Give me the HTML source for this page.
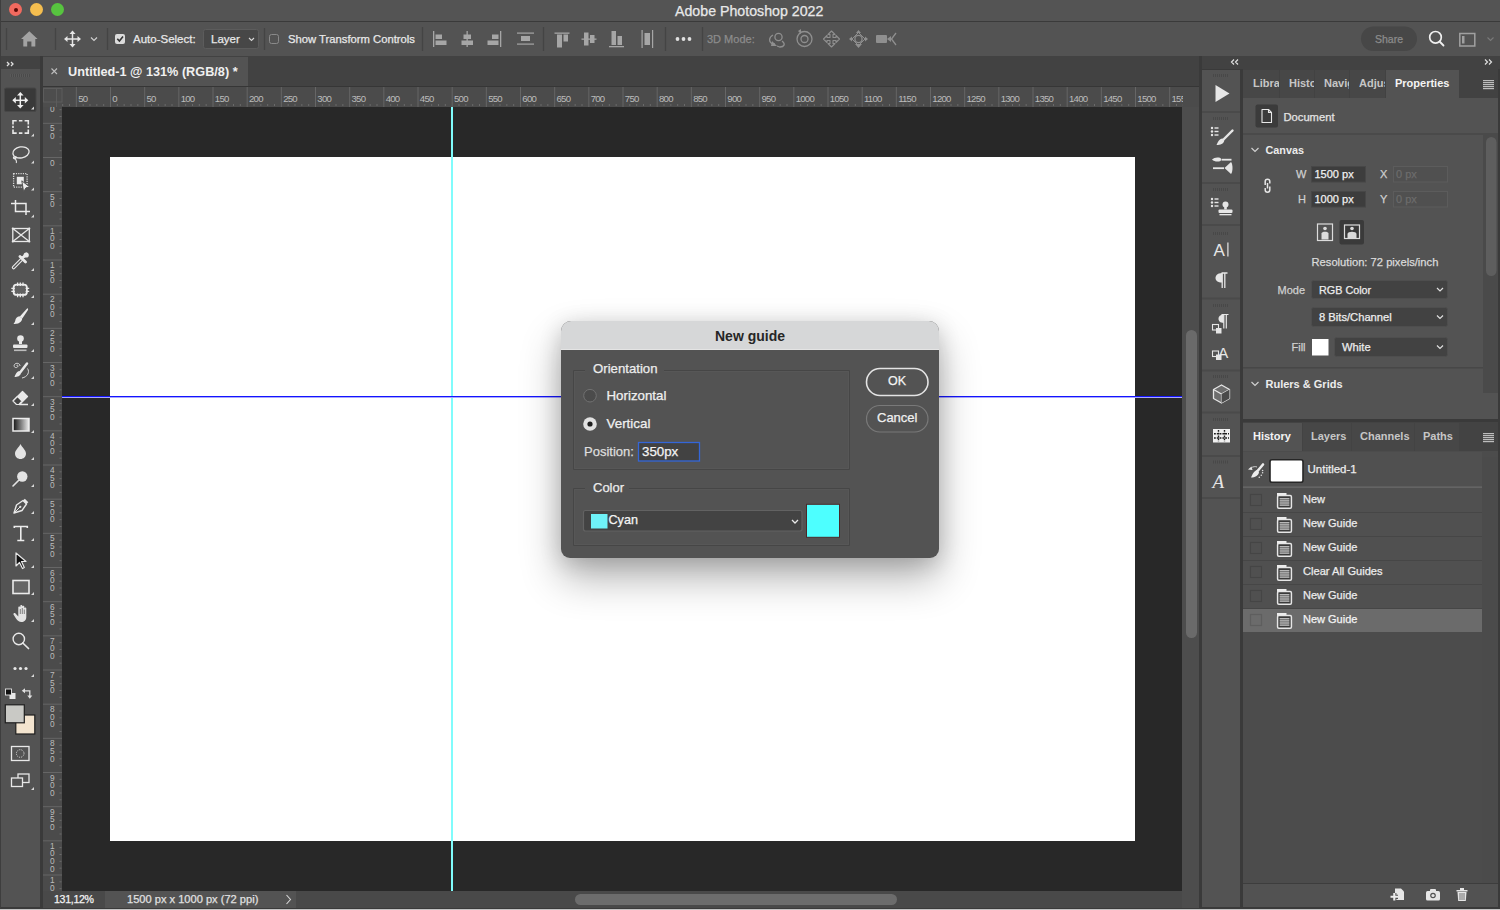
<!DOCTYPE html>
<html><head><meta charset="utf-8">
<style>
*{box-sizing:border-box;margin:0;padding:0}
html,body{width:1500px;height:910px;overflow:hidden;background:#535353;font-family:"Liberation Sans",sans-serif;color:#e8e8e8}
.a{position:absolute}
.t{position:absolute;white-space:nowrap;line-height:1;-webkit-text-stroke:0.25px currentColor}
</style></head><body>
<!-- title bar -->
<div class="a" style="left:0;top:0;width:1500px;height:21px;background:#545454"></div>
<div class="a" style="left:0;top:21px;width:1500px;height:1px;background:#3a3a3a"></div>
<div class="a" style="left:9px;top:3px;width:13px;height:13px;border-radius:50%;background:#f26a5f"></div>
<div class="a" style="left:13.5px;top:7.5px;width:4px;height:4px;border-radius:50%;background:#5a0a06"></div>
<div class="a" style="left:30px;top:3px;width:13px;height:13px;border-radius:50%;background:#f5be4f"></div>
<div class="a" style="left:51px;top:3px;width:13px;height:13px;border-radius:50%;background:#57c43f"></div>
<div class="t" style="left:675px;top:4px;font-size:14.2px;color:#e8e8e8">Adobe Photoshop 2022</div>
<!-- options bar -->
<div class="a" style="left:0;top:22px;width:1500px;height:34px;background:#535353"></div>
<svg class="a" style="left:0;top:22px" width="1500" height="34">
 <g stroke="#444" stroke-width="1.2">
  <line x1="6.5" y1="6" x2="6.5" y2="28"/><line x1="55.5" y1="6" x2="55.5" y2="28"/>
  <line x1="107.5" y1="6" x2="107.5" y2="28"/><line x1="264.5" y1="6" x2="264.5" y2="28"/>
  <line x1="422.5" y1="5" x2="422.5" y2="29"/><line x1="543.5" y1="5" x2="543.5" y2="29"/>
  <line x1="665.5" y1="5" x2="665.5" y2="29"/><line x1="702.5" y1="5" x2="702.5" y2="29"/>
 </g>
 <!-- home -->
 <path d="M29.3 9.2 L37.6 17 L35.3 17 L35.3 24.6 L31.4 24.6 L31.4 19.5 L27.2 19.5 L27.2 24.6 L23.3 24.6 L23.3 17 L21 17 Z" fill="#a3a3a3"/>
 <!-- move tool -->
 <g stroke="#e6e6e6" stroke-width="1.5" fill="none"><line x1="72.5" y1="10" x2="72.5" y2="24"/><line x1="65.5" y1="17" x2="79.5" y2="17"/></g>
 <g fill="#e6e6e6"><path d="M72.5 8.5 L69.5 12 L75.5 12Z"/><path d="M72.5 25.5 L69.5 22 L75.5 22Z"/><path d="M64 17 L67.5 14 L67.5 20Z"/><path d="M81 17 L77.5 14 L77.5 20Z"/></g>
 <path d="M91 15.5 L94 18.5 L97 15.5" stroke="#cfcfcf" stroke-width="1.2" fill="none"/>
 <!-- checkbox checked -->
 <rect x="115" y="12" width="10" height="10" rx="2" fill="#dcdcdc"/>
 <path d="M117.3 16.8 L119.4 19 L123 14.6" stroke="#333" stroke-width="1.6" fill="none"/>
 <!-- layer dropdown -->
 <rect x="203.5" y="7.5" width="55" height="19" rx="2" fill="#474747" stroke="#5c5c5c"/>
 <path d="M249 16 L251.5 18.5 L254 16" stroke="#d8d8d8" stroke-width="1.1" fill="none"/>
 <!-- empty checkbox -->
 <rect x="269.5" y="12.5" width="9" height="9" rx="2" fill="none" stroke="#8a8a8a" stroke-width="1"/>
 <!-- align icons -->
 <g fill="#a6a6a6">
  <rect x="433" y="9" width="1.3" height="16"/><rect x="435.5" y="12.5" width="6.5" height="4.5"/><rect x="435.5" y="18.5" width="11" height="4.5"/>
  <rect x="466.5" y="9" width="1.3" height="16"/><rect x="463.5" y="12.5" width="7.5" height="4.5"/><rect x="461.5" y="18.5" width="11.5" height="4.5"/>
  <rect x="500" y="9" width="1.3" height="16"/><rect x="492" y="12.5" width="6.5" height="4.5"/><rect x="487.5" y="18.5" width="11" height="4.5"/>
  <rect x="517" y="10.5" width="17" height="1.2"/><rect x="517" y="21.5" width="17" height="1.2"/><rect x="521" y="14" width="9" height="5"/>
  <rect x="554.5" y="10.5" width="15" height="1.3"/><rect x="557" y="12.5" width="5" height="13"/><rect x="563.5" y="12.5" width="4.5" height="7"/>
  <rect x="581.5" y="16.5" width="15" height="1.3"/><rect x="584" y="10.5" width="4.5" height="13"/><rect x="590" y="13" width="4.5" height="8"/>
  <rect x="609" y="24" width="15" height="1.3"/><rect x="611.5" y="9" width="4.5" height="14"/><rect x="617.5" y="14" width="4.5" height="9"/>
  <rect x="641.5" y="8" width="1.2" height="18"/><rect x="652" y="8" width="1.2" height="18"/><rect x="644.5" y="11" width="5.5" height="12"/>
 </g>
 <g fill="#e0e0e0"><circle cx="677.5" cy="17" r="1.9"/><circle cx="683.5" cy="17" r="1.9"/><circle cx="689.5" cy="17" r="1.9"/></g>
 <!-- 3d icons -->
 <g stroke="#8f8f8f" stroke-width="1.3" fill="none">
  <circle cx="778.5" cy="15" r="3.6"/><path d="M773 13 C769 15 768 20 773 22 L775 22 M782 19 C786 22 784 25 780 25 L777 24"/>
  <circle cx="804.5" cy="17" r="7.5"/><circle cx="804.5" cy="17" r="3.5"/>
  <path d="M831.5 9 L835 12.5 L833 12.5 L833 15.5 L836 15.5 L836 13.5 L839.5 17 L836 20.5 L836 18.5 L833 18.5 L833 21.5 L835 21.5 L831.5 25 L828 21.5 L830 21.5 L830 18.5 L827 18.5 L827 20.5 L823.5 17 L827 13.5 L827 15.5 L830 15.5 L830 12.5 L828 12.5 Z" stroke-width="1.1" stroke-linejoin="round"/>
  <circle cx="858.5" cy="17" r="3.6"/><path d="M852 17 L858.5 10.5 L865 17 L858.5 23.5 Z" stroke-width="1"/>
 </g>
 <g fill="#8f8f8f">
  <path d="M772 19 L777 24 L771 24Z"/><path d="M798 9 L801 7 L801 12Z"/>
  <path d="M858.5 8 L856 11 L861 11Z"/><path d="M858.5 26 L855 22 L862 22Z"/><path d="M849 17 L852 14.5 L852 19.5Z"/><path d="M868 17 L865 14.5 L865 19.5Z"/>
  <rect x="876" y="13" width="11" height="8" rx="1"/><path d="M887 17 L891 14 L891 20Z"/>
 </g>
 <path d="M896 11 L891.5 17 L896 23" stroke="#8f8f8f" stroke-width="1.3" fill="none"/>
 <!-- share -->
 <rect x="1361" y="4.5" width="56" height="24.5" rx="12.25" fill="#474747"/>
 <!-- search -->
 <circle cx="1435.5" cy="15.3" r="5.8" stroke="#f0f0f0" stroke-width="1.7" fill="none"/>
 <line x1="1439.6" y1="19.5" x2="1443.5" y2="23.5" stroke="#f0f0f0" stroke-width="1.8" stroke-linecap="round"/>
 <!-- workspace -->
 <rect x="1459.8" y="11.5" width="15" height="12.5" stroke="#a0a0a0" stroke-width="1.5" fill="none"/>
 <rect x="1462" y="14" width="2.5" height="7.5" fill="#a0a0a0"/>
 <path d="M1487.5 15.5 L1490.5 18.5 L1493.5 15.5" stroke="#7a7a7a" stroke-width="1.1" fill="none"/>
</svg>
<div class="t" style="left:133px;top:34px;font-size:11.5px;color:#e8e8e8">Auto-Select:</div>
<div class="t" style="left:211px;top:34px;font-size:11.5px;color:#e8e8e8">Layer</div>
<div class="t" style="left:288px;top:34px;font-size:11.25px;color:#e8e8e8">Show Transform Controls</div>
<div class="t" style="left:707px;top:34px;font-size:11px;color:#8c8c8c">3D Mode:</div>
<div class="t" style="left:1375px;top:33.5px;font-size:10.5px;color:#8c8c8c">Share</div>

<!-- dark frame below options -->
<div class="a" style="left:0;top:56px;width:1500px;height:854px;background:#3a3a3a"></div>

<!-- tools panel -->
<div class="a" style="left:0;top:56px;width:40px;height:13px;background:#424242"></div>
<div class="a" style="left:0;top:69px;width:40px;height:838px;background:#535353"></div>
<svg class="a" style="left:0;top:56px" width="40" height="851">
 <path d="M7 6 L9 8 L7 10 M11 6 L13 8 L11 10" stroke="#e0e0e0" stroke-width="1.3" fill="none"/>
 <g fill="#4a4a4a"><rect x="10" y="18" width="20" height="3"/></g>
 <g stroke="#5e5e5e" stroke-width="0.8"><path d="M10.5 18v3M12.5 18v3M14.5 18v3M16.5 18v3M18.5 18v3M20.5 18v3M22.5 18v3M24.5 18v3M26.5 18v3M28.5 18v3"/></g>
 <rect x="4.5" y="32" width="31.5" height="23.5" rx="1.5" fill="#393939" stroke="#474747" stroke-width="1"/>
</svg>
<svg class="a" style="left:0;top:0" width="40" height="910">
 <defs>
  <linearGradient id="gr" x1="0" x2="1"><stop offset="0" stop-color="#111"/><stop offset="1" stop-color="#eee"/></linearGradient>
 </defs>
 <g fill="#d8d8d8">
  <!-- corner triangles -->
  <path d="M31 109.5 L34 106.5 L34 109.5Z"/><path d="M31 136.5 L34 133.5 L34 136.5Z"/><path d="M31 163.5 L34 160.5 L34 163.5Z"/>
  <path d="M31 190.5 L34 187.5 L34 190.5Z"/><path d="M31 217.5 L34 214.5 L34 217.5Z"/><path d="M31 271 L34 268 L34 271Z"/>
  <path d="M31 298 L34 295 L34 298Z"/><path d="M31 325 L34 322 L34 325Z"/><path d="M31 352 L34 349 L34 352Z"/>
  <path d="M31 379 L34 376 L34 379Z"/><path d="M31 406 L34 403 L34 406Z"/><path d="M31 433 L34 430 L34 433Z"/>
  <path d="M31 460 L34 457 L34 460Z"/><path d="M31 487 L34 484 L34 487Z"/><path d="M31 514 L34 511 L34 514Z"/>
  <path d="M31 541 L34 538 L34 541Z"/><path d="M31 568 L34 565 L34 568Z"/><path d="M31 595 L34 592 L34 595Z"/>
  <path d="M31 622 L34 619 L34 622Z"/><path d="M31 677 L34 674 L34 677Z"/><path d="M31 790 L34 787 L34 790Z"/>
 </g>
 <!-- move -->
 <g stroke="#f0f0f0" stroke-width="1.5" fill="none"><line x1="20.3" y1="94" x2="20.3" y2="107"/><line x1="13.5" y1="100.3" x2="27" y2="100.3"/></g>
 <g fill="#f0f0f0"><path d="M20.3 92 L17 95.5 L23.6 95.5Z"/><path d="M20.3 108.5 L17 105 L23.6 105Z"/><path d="M12.3 100.3 L15.8 97 L15.8 103.6Z"/><path d="M28.3 100.3 L24.8 97 L24.8 103.6Z"/></g>
 <!-- marquee -->
 <path d="M13 124.5 L13 120.8 L16.7 120.8 M24.6 120.8 L28.3 120.8 L28.3 124.5 M28.3 129.4 L28.3 133.1 L24.6 133.1 M16.7 133.1 L13 133.1 L13 129.4 M18.9 120.8 L22.4 120.8 M18.9 133.1 L22.4 133.1 M13 125.8 L13 128.1 M28.3 125.8 L28.3 128.1" stroke="#e8e8e8" stroke-width="1.6" fill="none"/>
 <!-- lasso -->
 <ellipse cx="21" cy="152.4" rx="8.2" ry="5.5" stroke="#e8e8e8" stroke-width="1.3" fill="none" transform="rotate(-10 21 152.4)"/>
 <path d="M14 156.5 C12.5 158.5 14.5 159.5 16 158 C17 157 15 156 14.8 157.5 C14.8 159 17.5 160.5 16.3 163" stroke="#e8e8e8" stroke-width="1.2" fill="none"/>
 <!-- object select -->
 <rect x="13.6" y="173.6" width="13.5" height="13.5" stroke="#d8d8d8" stroke-width="1.3" fill="none" stroke-dasharray="1.2 1.1"/>
 <rect x="16.8" y="176.8" width="7" height="7.5" fill="#ececec"/>
 <path d="M21.8 180.8 L30 187.3 L26 187.8 L23.6 191.8 Z" fill="#ececec" stroke="#535353" stroke-width="1"/>
 <!-- crop -->
 <g stroke="#ececec" stroke-width="1.5" fill="none"><path d="M11 203.5 L26 203.5 L26 215"/><path d="M15.5 200 L15.5 211.5 L30 211.5"/></g>
 <!-- frame -->
 <g stroke="#e8e8e8" stroke-width="1.3" fill="none"><rect x="12.8" y="228.5" width="16.5" height="13"/><path d="M12.8 228.5 L29.3 241.5 M29.3 228.5 L12.8 241.5"/></g>
 <g fill="#e8e8e8"><circle cx="12.8" cy="228.5" r="1.1"/><circle cx="29.3" cy="228.5" r="1.1"/><circle cx="12.8" cy="241.5" r="1.1"/><circle cx="29.3" cy="241.5" r="1.1"/></g>
 <!-- eyedropper -->
 <path d="M13.6 267.5 L22 259" stroke="#e8e8e8" stroke-width="3.6" stroke-linecap="round" fill="none"/>
 <path d="M13.6 267.5 L22 259" stroke="#535353" stroke-width="1.3" stroke-linecap="round" fill="none"/>
 <path d="M20 256.5 L25.5 262 M22.5 258 L26.5 254" stroke="#e8e8e8" stroke-width="2.8" stroke-linecap="round"/>
 <circle cx="26.2" cy="255" r="2.6" fill="#e8e8e8"/>
 <!-- spot healing -->
 <rect x="13.6" y="284.6" width="13.3" height="10.3" rx="3" fill="#626262" stroke="#ececec" stroke-width="1.8"/>
 <g stroke="#ececec" stroke-width="1.3"><path d="M17.6 282.4v3.6M20.3 282.4v3.6M23 282.4v3.6M17.6 293.6v3.6M20.3 293.6v3.6M23 293.6v3.6M11.3 288.3h3.6M11.3 291.3h3.6M25.6 288.3h3.6M25.6 291.3h3.6"/></g>
 <!-- brush -->
 <path d="M27.3 308.3 C28.3 308.6 28.3 309.5 27.8 310.2 L22.3 318.6 L19.8 316.4 Z" fill="#ececec"/>
 <path d="M19.5 316.3 C17 316.5 15.5 318.5 15.3 320.5 C15 322 14.2 323.3 13.5 324 C16.5 324.2 19.5 323.3 21 321.5 C22 320.3 22.3 319 22 318.3 Z" fill="#ececec"/>
 <!-- stamp -->
 <circle cx="20.5" cy="338.5" r="3.3" fill="#e8e8e8"/><rect x="19" y="340" width="3" height="4" fill="#e8e8e8"/>
 <rect x="13" y="344.5" width="14.5" height="3.6" rx="1" fill="#e8e8e8"/><rect x="14" y="349.5" width="12.5" height="1.6" fill="#bbb"/>
 <!-- history brush -->
 <path d="M27 363.5 L20.5 372" stroke="#e8e8e8" stroke-width="2.5" stroke-linecap="round"/>
 <path d="M19.5 371 C16.5 371.5 15.5 374.5 14.5 377 C17.5 377 20.5 376 21 373 Z" fill="#e8e8e8"/>
 <path d="M20 366 C20 363 16 362.5 14.5 364.5 C13 367 16 368.5 17.5 367 C19 365.5 17 364.5 16.5 365.5 M27.5 368.5 C30 372 27.5 377 22 378" stroke="#d8d8d8" stroke-width="1" fill="none"/>
 <!-- eraser -->
 <path d="M13 401 L22.5 391.5 L27.5 396.5 L19.5 404.5 L28 404.5" stroke="#e8e8e8" stroke-width="1.3" fill="none" stroke-linejoin="round"/>
 <path d="M17.5 396.5 L22.5 391.5 L27.5 396.5 L22.5 401.5Z" fill="#e8e8e8"/>
 <path d="M13 401 L17.5 396.5 L22 401 L19 404.5 L16.5 404.5 Z" fill="#444" stroke="#e8e8e8" stroke-width="1.2" stroke-linejoin="round"/>
 <!-- gradient -->
 <rect x="13" y="418.5" width="16" height="12.5" fill="url(#gr)" stroke="#ececec" stroke-width="1.5"/>
 <!-- blur drop -->
 <path d="M20.5 444 C22 447.5 26 450 26 453.5 C26 456.8 23.5 459 20.5 459 C17.5 459 15 456.8 15 453.5 C15 450 19 447.5 20.5 444Z" fill="#e3e3e3"/>
 <!-- dodge -->
 <circle cx="22.3" cy="476.5" r="5.2" fill="#e3e3e3"/><path d="M18.5 480.5 L13 486" stroke="#e3e3e3" stroke-width="1.6" stroke-linecap="round"/>
 <!-- pen -->
 <path d="M14 513 L16.5 505 L23 500.5 L26.5 504 L22 510.5 Z" stroke="#e8e8e8" stroke-width="1.4" fill="none" stroke-linejoin="round"/>
 <path d="M23 500.5 L24.8 498.7 L28.3 502.2 L26.5 504Z" fill="#e8e8e8"/>
 <path d="M14 513 L20 507" stroke="#e8e8e8" stroke-width="1"/><circle cx="20.3" cy="506.8" r="1.1" fill="#e8e8e8"/>
 <!-- type -->
 <path d="M14.3 528 L14.3 526.5 L27.3 526.5 L27.3 528 M20.8 526.5 L20.8 540.5 M17.3 540.5 L24.3 540.5" stroke="#ececec" stroke-width="1.6" fill="none"/>
 <!-- path select -->
 <path d="M16 553 L16 566 L19.5 562.5 L22.5 568.5 L24.3 567.5 L21.5 561.5 L26 561.5 Z" fill="#111" stroke="#e8e8e8" stroke-width="1.2" stroke-linejoin="round"/>
 <!-- rectangle -->
 <rect x="13" y="580.5" width="16" height="13" fill="#666" stroke="#ececec" stroke-width="1.6"/>
 <!-- hand -->
 <path d="M18.3 616.5 L18.3 607.5 C18.3 606.2 20.3 606.2 20.3 607.5 L20.3 613 L20.3 606 C20.3 604.7 22.3 604.7 22.3 606 L22.3 613 L22.3 606.8 C22.3 605.5 24.3 605.5 24.3 606.8 L24.3 613 L24.3 608.5 C24.3 607.2 26.3 607.2 26.3 608.5 L26.3 617 C26.3 620.5 24 622 21.5 622 C19 622 17.5 620.5 16 618.5 L13.5 614.5 C13 613.5 14.5 612.5 15.5 613.5 Z" fill="#e3e3e3"/>
 <g stroke="#535353" stroke-width="0.7"><path d="M20.3 609 L20.3 614 M22.3 608 L22.3 614 M24.3 609.5 L24.3 614"/></g>
 <!-- zoom -->
 <circle cx="18.8" cy="639" r="5.7" stroke="#e8e8e8" stroke-width="1.4" fill="none"/>
 <path d="M22.8 643 L28.5 648.5" stroke="#e8e8e8" stroke-width="1.7" stroke-linecap="round"/>
 <!-- more -->
 <g fill="#e8e8e8"><circle cx="15" cy="668.5" r="1.6"/><circle cx="20.5" cy="668.5" r="1.6"/><circle cx="26" cy="668.5" r="1.6"/></g>
 <!-- default colors -->
 <rect x="9.5" y="693" width="6" height="6" fill="#e8e8e8"/><rect x="5.5" y="689" width="6" height="6" fill="#111" stroke="#e8e8e8" stroke-width="0.9"/>
 <path d="M24.5 690.8 L29.8 690.8 L29.8 696" stroke="#e0e0e0" stroke-width="1.3" fill="none"/>
 <path d="M21.8 690.8 L25 688.3 L25 693.3Z M27.3 695.5 L32.3 695.5 L29.8 698.7Z" fill="#e0e0e0"/>
 <!-- fg/bg -->
 <rect x="15.8" y="715" width="19" height="19" fill="#f3e4cf" stroke="#1e1e1e" stroke-width="1.2"/>
 <rect x="5.3" y="704.8" width="19" height="18" fill="#c9c9c5" stroke="#1e1e1e" stroke-width="1.2"/>
 <!-- quick mask -->
 <rect x="11.5" y="746.5" width="17.5" height="14" stroke="#e8e8e8" stroke-width="1.3" fill="none"/>
 <circle cx="20.2" cy="753.5" r="3.8" stroke="#d8d8d8" stroke-width="1" fill="none" stroke-dasharray="1 1"/>
 <!-- screen mode -->
 <rect x="18" y="774" width="11" height="8.5" stroke="#e8e8e8" stroke-width="1.3" fill="none"/>
 <rect x="11.5" y="778" width="11" height="8.5" stroke="#e8e8e8" stroke-width="1.3" fill="#535353"/>
</svg>

<!-- doc tab bar -->
<div class="a" style="left:43px;top:56px;width:1156px;height:30px;background:#424242"></div>
<div class="a" style="left:43px;top:57px;width:205px;height:29px;background:#535353"></div>
<div class="a" style="left:43px;top:86px;width:1156px;height:1px;background:#363636"></div>
<svg class="a" style="left:43px;top:57px" width="20" height="29"><path d="M8.5 11.5 L14 17 M14 11.5 L8.5 17" stroke="#bdbdbd" stroke-width="1.1"/></svg>
<div class="t" style="left:68px;top:65.5px;font-size:12.7px;font-weight:700;-webkit-text-stroke:0;color:#f0f0f0">Untitled-1 @ 131% (RGB/8) *</div>
<svg class="a" style="left:43px;top:87px" width="1156" height="20">
<defs><clipPath id="rc"><rect x="0" y="0" width="1140" height="20"/></clipPath></defs>
<rect width="1156" height="20" fill="#4b4b4b"/>
<g clip-path="url(#rc)">
<rect x="0" y="0" width="19" height="20" fill="#4d4d4d"/>
<rect x="0.5" y="1.5" width="18.5" height="13.5" fill="none" stroke="#5c5c5c" stroke-width="1"/>
<line x1="13.5" y1="1" x2="13.5" y2="20" stroke="#5c5c5c" stroke-width="1"/>
<rect x="19.17" y="17" width="1" height="2" fill="#6a6a6a"/>
<rect x="26.00" y="17" width="1" height="2" fill="#6a6a6a"/>
<rect x="32.83" y="0" width="1" height="20" fill="#666"/>
<rect x="39.67" y="17" width="1" height="2" fill="#6a6a6a"/>
<rect x="46.50" y="17" width="1" height="2" fill="#6a6a6a"/>
<rect x="53.33" y="17" width="1" height="2" fill="#6a6a6a"/>
<rect x="60.17" y="17" width="1" height="2" fill="#6a6a6a"/>
<rect x="67.00" y="0" width="1" height="20" fill="#666"/>
<rect x="73.83" y="17" width="1" height="2" fill="#6a6a6a"/>
<rect x="80.67" y="17" width="1" height="2" fill="#6a6a6a"/>
<rect x="87.50" y="17" width="1" height="2" fill="#6a6a6a"/>
<rect x="94.33" y="17" width="1" height="2" fill="#6a6a6a"/>
<rect x="101.17" y="0" width="1" height="20" fill="#666"/>
<rect x="108.00" y="17" width="1" height="2" fill="#6a6a6a"/>
<rect x="114.83" y="17" width="1" height="2" fill="#6a6a6a"/>
<rect x="121.67" y="17" width="1" height="2" fill="#6a6a6a"/>
<rect x="128.50" y="17" width="1" height="2" fill="#6a6a6a"/>
<rect x="135.33" y="0" width="1" height="20" fill="#666"/>
<rect x="142.17" y="17" width="1" height="2" fill="#6a6a6a"/>
<rect x="149.00" y="17" width="1" height="2" fill="#6a6a6a"/>
<rect x="155.83" y="17" width="1" height="2" fill="#6a6a6a"/>
<rect x="162.67" y="17" width="1" height="2" fill="#6a6a6a"/>
<rect x="169.50" y="0" width="1" height="20" fill="#666"/>
<rect x="176.33" y="17" width="1" height="2" fill="#6a6a6a"/>
<rect x="183.17" y="17" width="1" height="2" fill="#6a6a6a"/>
<rect x="190.00" y="17" width="1" height="2" fill="#6a6a6a"/>
<rect x="196.83" y="17" width="1" height="2" fill="#6a6a6a"/>
<rect x="203.67" y="0" width="1" height="20" fill="#666"/>
<rect x="210.50" y="17" width="1" height="2" fill="#6a6a6a"/>
<rect x="217.33" y="17" width="1" height="2" fill="#6a6a6a"/>
<rect x="224.17" y="17" width="1" height="2" fill="#6a6a6a"/>
<rect x="231.00" y="17" width="1" height="2" fill="#6a6a6a"/>
<rect x="237.83" y="0" width="1" height="20" fill="#666"/>
<rect x="244.67" y="17" width="1" height="2" fill="#6a6a6a"/>
<rect x="251.50" y="17" width="1" height="2" fill="#6a6a6a"/>
<rect x="258.33" y="17" width="1" height="2" fill="#6a6a6a"/>
<rect x="265.17" y="17" width="1" height="2" fill="#6a6a6a"/>
<rect x="272.00" y="0" width="1" height="20" fill="#666"/>
<rect x="278.83" y="17" width="1" height="2" fill="#6a6a6a"/>
<rect x="285.67" y="17" width="1" height="2" fill="#6a6a6a"/>
<rect x="292.50" y="17" width="1" height="2" fill="#6a6a6a"/>
<rect x="299.33" y="17" width="1" height="2" fill="#6a6a6a"/>
<rect x="306.17" y="0" width="1" height="20" fill="#666"/>
<rect x="313.00" y="17" width="1" height="2" fill="#6a6a6a"/>
<rect x="319.83" y="17" width="1" height="2" fill="#6a6a6a"/>
<rect x="326.67" y="17" width="1" height="2" fill="#6a6a6a"/>
<rect x="333.50" y="17" width="1" height="2" fill="#6a6a6a"/>
<rect x="340.33" y="0" width="1" height="20" fill="#666"/>
<rect x="347.17" y="17" width="1" height="2" fill="#6a6a6a"/>
<rect x="354.00" y="17" width="1" height="2" fill="#6a6a6a"/>
<rect x="360.83" y="17" width="1" height="2" fill="#6a6a6a"/>
<rect x="367.67" y="17" width="1" height="2" fill="#6a6a6a"/>
<rect x="374.50" y="0" width="1" height="20" fill="#666"/>
<rect x="381.33" y="17" width="1" height="2" fill="#6a6a6a"/>
<rect x="388.17" y="17" width="1" height="2" fill="#6a6a6a"/>
<rect x="395.00" y="17" width="1" height="2" fill="#6a6a6a"/>
<rect x="401.83" y="17" width="1" height="2" fill="#6a6a6a"/>
<rect x="408.67" y="0" width="1" height="20" fill="#666"/>
<rect x="415.50" y="17" width="1" height="2" fill="#6a6a6a"/>
<rect x="422.33" y="17" width="1" height="2" fill="#6a6a6a"/>
<rect x="429.17" y="17" width="1" height="2" fill="#6a6a6a"/>
<rect x="436.00" y="17" width="1" height="2" fill="#6a6a6a"/>
<rect x="442.83" y="0" width="1" height="20" fill="#666"/>
<rect x="449.67" y="17" width="1" height="2" fill="#6a6a6a"/>
<rect x="456.50" y="17" width="1" height="2" fill="#6a6a6a"/>
<rect x="463.33" y="17" width="1" height="2" fill="#6a6a6a"/>
<rect x="470.17" y="17" width="1" height="2" fill="#6a6a6a"/>
<rect x="477.00" y="0" width="1" height="20" fill="#666"/>
<rect x="483.83" y="17" width="1" height="2" fill="#6a6a6a"/>
<rect x="490.67" y="17" width="1" height="2" fill="#6a6a6a"/>
<rect x="497.50" y="17" width="1" height="2" fill="#6a6a6a"/>
<rect x="504.33" y="17" width="1" height="2" fill="#6a6a6a"/>
<rect x="511.17" y="0" width="1" height="20" fill="#666"/>
<rect x="518.00" y="17" width="1" height="2" fill="#6a6a6a"/>
<rect x="524.83" y="17" width="1" height="2" fill="#6a6a6a"/>
<rect x="531.67" y="17" width="1" height="2" fill="#6a6a6a"/>
<rect x="538.50" y="17" width="1" height="2" fill="#6a6a6a"/>
<rect x="545.33" y="0" width="1" height="20" fill="#666"/>
<rect x="552.17" y="17" width="1" height="2" fill="#6a6a6a"/>
<rect x="559.00" y="17" width="1" height="2" fill="#6a6a6a"/>
<rect x="565.83" y="17" width="1" height="2" fill="#6a6a6a"/>
<rect x="572.67" y="17" width="1" height="2" fill="#6a6a6a"/>
<rect x="579.50" y="0" width="1" height="20" fill="#666"/>
<rect x="586.33" y="17" width="1" height="2" fill="#6a6a6a"/>
<rect x="593.17" y="17" width="1" height="2" fill="#6a6a6a"/>
<rect x="600.00" y="17" width="1" height="2" fill="#6a6a6a"/>
<rect x="606.83" y="17" width="1" height="2" fill="#6a6a6a"/>
<rect x="613.67" y="0" width="1" height="20" fill="#666"/>
<rect x="620.50" y="17" width="1" height="2" fill="#6a6a6a"/>
<rect x="627.33" y="17" width="1" height="2" fill="#6a6a6a"/>
<rect x="634.17" y="17" width="1" height="2" fill="#6a6a6a"/>
<rect x="641.00" y="17" width="1" height="2" fill="#6a6a6a"/>
<rect x="647.83" y="0" width="1" height="20" fill="#666"/>
<rect x="654.67" y="17" width="1" height="2" fill="#6a6a6a"/>
<rect x="661.50" y="17" width="1" height="2" fill="#6a6a6a"/>
<rect x="668.33" y="17" width="1" height="2" fill="#6a6a6a"/>
<rect x="675.17" y="17" width="1" height="2" fill="#6a6a6a"/>
<rect x="682.00" y="0" width="1" height="20" fill="#666"/>
<rect x="688.83" y="17" width="1" height="2" fill="#6a6a6a"/>
<rect x="695.67" y="17" width="1" height="2" fill="#6a6a6a"/>
<rect x="702.50" y="17" width="1" height="2" fill="#6a6a6a"/>
<rect x="709.33" y="17" width="1" height="2" fill="#6a6a6a"/>
<rect x="716.17" y="0" width="1" height="20" fill="#666"/>
<rect x="723.00" y="17" width="1" height="2" fill="#6a6a6a"/>
<rect x="729.83" y="17" width="1" height="2" fill="#6a6a6a"/>
<rect x="736.67" y="17" width="1" height="2" fill="#6a6a6a"/>
<rect x="743.50" y="17" width="1" height="2" fill="#6a6a6a"/>
<rect x="750.33" y="0" width="1" height="20" fill="#666"/>
<rect x="757.17" y="17" width="1" height="2" fill="#6a6a6a"/>
<rect x="764.00" y="17" width="1" height="2" fill="#6a6a6a"/>
<rect x="770.83" y="17" width="1" height="2" fill="#6a6a6a"/>
<rect x="777.67" y="17" width="1" height="2" fill="#6a6a6a"/>
<rect x="784.50" y="0" width="1" height="20" fill="#666"/>
<rect x="791.33" y="17" width="1" height="2" fill="#6a6a6a"/>
<rect x="798.17" y="17" width="1" height="2" fill="#6a6a6a"/>
<rect x="805.00" y="17" width="1" height="2" fill="#6a6a6a"/>
<rect x="811.83" y="17" width="1" height="2" fill="#6a6a6a"/>
<rect x="818.67" y="0" width="1" height="20" fill="#666"/>
<rect x="825.50" y="17" width="1" height="2" fill="#6a6a6a"/>
<rect x="832.33" y="17" width="1" height="2" fill="#6a6a6a"/>
<rect x="839.17" y="17" width="1" height="2" fill="#6a6a6a"/>
<rect x="846.00" y="17" width="1" height="2" fill="#6a6a6a"/>
<rect x="852.83" y="0" width="1" height="20" fill="#666"/>
<rect x="859.67" y="17" width="1" height="2" fill="#6a6a6a"/>
<rect x="866.50" y="17" width="1" height="2" fill="#6a6a6a"/>
<rect x="873.33" y="17" width="1" height="2" fill="#6a6a6a"/>
<rect x="880.17" y="17" width="1" height="2" fill="#6a6a6a"/>
<rect x="887.00" y="0" width="1" height="20" fill="#666"/>
<rect x="893.83" y="17" width="1" height="2" fill="#6a6a6a"/>
<rect x="900.67" y="17" width="1" height="2" fill="#6a6a6a"/>
<rect x="907.50" y="17" width="1" height="2" fill="#6a6a6a"/>
<rect x="914.33" y="17" width="1" height="2" fill="#6a6a6a"/>
<rect x="921.17" y="0" width="1" height="20" fill="#666"/>
<rect x="928.00" y="17" width="1" height="2" fill="#6a6a6a"/>
<rect x="934.83" y="17" width="1" height="2" fill="#6a6a6a"/>
<rect x="941.67" y="17" width="1" height="2" fill="#6a6a6a"/>
<rect x="948.50" y="17" width="1" height="2" fill="#6a6a6a"/>
<rect x="955.33" y="0" width="1" height="20" fill="#666"/>
<rect x="962.17" y="17" width="1" height="2" fill="#6a6a6a"/>
<rect x="969.00" y="17" width="1" height="2" fill="#6a6a6a"/>
<rect x="975.83" y="17" width="1" height="2" fill="#6a6a6a"/>
<rect x="982.67" y="17" width="1" height="2" fill="#6a6a6a"/>
<rect x="989.50" y="0" width="1" height="20" fill="#666"/>
<rect x="996.33" y="17" width="1" height="2" fill="#6a6a6a"/>
<rect x="1003.17" y="17" width="1" height="2" fill="#6a6a6a"/>
<rect x="1010.00" y="17" width="1" height="2" fill="#6a6a6a"/>
<rect x="1016.83" y="17" width="1" height="2" fill="#6a6a6a"/>
<rect x="1023.67" y="0" width="1" height="20" fill="#666"/>
<rect x="1030.50" y="17" width="1" height="2" fill="#6a6a6a"/>
<rect x="1037.33" y="17" width="1" height="2" fill="#6a6a6a"/>
<rect x="1044.17" y="17" width="1" height="2" fill="#6a6a6a"/>
<rect x="1051.00" y="17" width="1" height="2" fill="#6a6a6a"/>
<rect x="1057.83" y="0" width="1" height="20" fill="#666"/>
<rect x="1064.67" y="17" width="1" height="2" fill="#6a6a6a"/>
<rect x="1071.50" y="17" width="1" height="2" fill="#6a6a6a"/>
<rect x="1078.33" y="17" width="1" height="2" fill="#6a6a6a"/>
<rect x="1085.17" y="17" width="1" height="2" fill="#6a6a6a"/>
<rect x="1092.00" y="0" width="1" height="20" fill="#666"/>
<rect x="1098.83" y="17" width="1" height="2" fill="#6a6a6a"/>
<rect x="1105.67" y="17" width="1" height="2" fill="#6a6a6a"/>
<rect x="1112.50" y="17" width="1" height="2" fill="#6a6a6a"/>
<rect x="1119.33" y="17" width="1" height="2" fill="#6a6a6a"/>
<rect x="1126.17" y="0" width="1" height="20" fill="#666"/>
<rect x="1133.00" y="17" width="1" height="2" fill="#6a6a6a"/>
<rect x="1139.83" y="17" width="1" height="2" fill="#6a6a6a"/>
<rect x="1146.67" y="17" width="1" height="2" fill="#6a6a6a"/>
<rect x="1153.50" y="17" width="1" height="2" fill="#6a6a6a"/>
<text x="35.13" y="15.2" font-size="9.6" fill="#bcbcbc" font-family="Liberation Sans" letter-spacing="-0.75">50</text>
<text x="69.30" y="15.2" font-size="9.6" fill="#bcbcbc" font-family="Liberation Sans" letter-spacing="-0.75">0</text>
<text x="103.47" y="15.2" font-size="9.6" fill="#bcbcbc" font-family="Liberation Sans" letter-spacing="-0.75">50</text>
<text x="137.63" y="15.2" font-size="9.6" fill="#bcbcbc" font-family="Liberation Sans" letter-spacing="-0.75">100</text>
<text x="171.80" y="15.2" font-size="9.6" fill="#bcbcbc" font-family="Liberation Sans" letter-spacing="-0.75">150</text>
<text x="205.97" y="15.2" font-size="9.6" fill="#bcbcbc" font-family="Liberation Sans" letter-spacing="-0.75">200</text>
<text x="240.13" y="15.2" font-size="9.6" fill="#bcbcbc" font-family="Liberation Sans" letter-spacing="-0.75">250</text>
<text x="274.30" y="15.2" font-size="9.6" fill="#bcbcbc" font-family="Liberation Sans" letter-spacing="-0.75">300</text>
<text x="308.47" y="15.2" font-size="9.6" fill="#bcbcbc" font-family="Liberation Sans" letter-spacing="-0.75">350</text>
<text x="342.63" y="15.2" font-size="9.6" fill="#bcbcbc" font-family="Liberation Sans" letter-spacing="-0.75">400</text>
<text x="376.80" y="15.2" font-size="9.6" fill="#bcbcbc" font-family="Liberation Sans" letter-spacing="-0.75">450</text>
<text x="410.97" y="15.2" font-size="9.6" fill="#bcbcbc" font-family="Liberation Sans" letter-spacing="-0.75">500</text>
<text x="445.13" y="15.2" font-size="9.6" fill="#bcbcbc" font-family="Liberation Sans" letter-spacing="-0.75">550</text>
<text x="479.30" y="15.2" font-size="9.6" fill="#bcbcbc" font-family="Liberation Sans" letter-spacing="-0.75">600</text>
<text x="513.47" y="15.2" font-size="9.6" fill="#bcbcbc" font-family="Liberation Sans" letter-spacing="-0.75">650</text>
<text x="547.63" y="15.2" font-size="9.6" fill="#bcbcbc" font-family="Liberation Sans" letter-spacing="-0.75">700</text>
<text x="581.80" y="15.2" font-size="9.6" fill="#bcbcbc" font-family="Liberation Sans" letter-spacing="-0.75">750</text>
<text x="615.97" y="15.2" font-size="9.6" fill="#bcbcbc" font-family="Liberation Sans" letter-spacing="-0.75">800</text>
<text x="650.13" y="15.2" font-size="9.6" fill="#bcbcbc" font-family="Liberation Sans" letter-spacing="-0.75">850</text>
<text x="684.30" y="15.2" font-size="9.6" fill="#bcbcbc" font-family="Liberation Sans" letter-spacing="-0.75">900</text>
<text x="718.47" y="15.2" font-size="9.6" fill="#bcbcbc" font-family="Liberation Sans" letter-spacing="-0.75">950</text>
<text x="752.63" y="15.2" font-size="9.6" fill="#bcbcbc" font-family="Liberation Sans" letter-spacing="-0.75">1000</text>
<text x="786.80" y="15.2" font-size="9.6" fill="#bcbcbc" font-family="Liberation Sans" letter-spacing="-0.75">1050</text>
<text x="820.97" y="15.2" font-size="9.6" fill="#bcbcbc" font-family="Liberation Sans" letter-spacing="-0.75">1100</text>
<text x="855.13" y="15.2" font-size="9.6" fill="#bcbcbc" font-family="Liberation Sans" letter-spacing="-0.75">1150</text>
<text x="889.30" y="15.2" font-size="9.6" fill="#bcbcbc" font-family="Liberation Sans" letter-spacing="-0.75">1200</text>
<text x="923.47" y="15.2" font-size="9.6" fill="#bcbcbc" font-family="Liberation Sans" letter-spacing="-0.75">1250</text>
<text x="957.63" y="15.2" font-size="9.6" fill="#bcbcbc" font-family="Liberation Sans" letter-spacing="-0.75">1300</text>
<text x="991.80" y="15.2" font-size="9.6" fill="#bcbcbc" font-family="Liberation Sans" letter-spacing="-0.75">1350</text>
<text x="1025.97" y="15.2" font-size="9.6" fill="#bcbcbc" font-family="Liberation Sans" letter-spacing="-0.75">1400</text>
<text x="1060.13" y="15.2" font-size="9.6" fill="#bcbcbc" font-family="Liberation Sans" letter-spacing="-0.75">1450</text>
<text x="1094.30" y="15.2" font-size="9.6" fill="#bcbcbc" font-family="Liberation Sans" letter-spacing="-0.75">1500</text>
<text x="1128.47" y="15.2" font-size="9.6" fill="#bcbcbc" font-family="Liberation Sans" letter-spacing="-0.75">1550</text>
</g></svg>
<svg class="a" style="left:43px;top:107px" width="19" height="784">
<rect width="19" height="784" fill="#4b4b4b"/>
<rect x="0" y="-18.33" width="19" height="1" fill="#666"/>
<text x="9.4" y="-9.83" font-size="8.3" fill="#bcbcbc" text-anchor="middle" font-family="Liberation Sans">1</text>
<text x="9.4" y="-2.23" font-size="8.3" fill="#bcbcbc" text-anchor="middle" font-family="Liberation Sans">0</text>
<text x="9.4" y="5.37" font-size="8.3" fill="#bcbcbc" text-anchor="middle" font-family="Liberation Sans">0</text>
<rect x="16.5" y="2.17" width="2" height="1" fill="#6a6a6a"/>
<rect x="16.5" y="9.00" width="2" height="1" fill="#6a6a6a"/>
<rect x="0" y="15.83" width="19" height="1" fill="#666"/>
<text x="9.4" y="24.33" font-size="8.3" fill="#bcbcbc" text-anchor="middle" font-family="Liberation Sans">5</text>
<text x="9.4" y="31.93" font-size="8.3" fill="#bcbcbc" text-anchor="middle" font-family="Liberation Sans">0</text>
<rect x="16.5" y="22.67" width="2" height="1" fill="#6a6a6a"/>
<rect x="16.5" y="29.50" width="2" height="1" fill="#6a6a6a"/>
<rect x="16.5" y="36.33" width="2" height="1" fill="#6a6a6a"/>
<rect x="16.5" y="43.17" width="2" height="1" fill="#6a6a6a"/>
<rect x="0" y="50.00" width="19" height="1" fill="#666"/>
<text x="9.4" y="58.50" font-size="8.3" fill="#bcbcbc" text-anchor="middle" font-family="Liberation Sans">0</text>
<rect x="16.5" y="56.83" width="2" height="1" fill="#6a6a6a"/>
<rect x="16.5" y="63.67" width="2" height="1" fill="#6a6a6a"/>
<rect x="16.5" y="70.50" width="2" height="1" fill="#6a6a6a"/>
<rect x="16.5" y="77.33" width="2" height="1" fill="#6a6a6a"/>
<rect x="0" y="84.17" width="19" height="1" fill="#666"/>
<text x="9.4" y="92.67" font-size="8.3" fill="#bcbcbc" text-anchor="middle" font-family="Liberation Sans">5</text>
<text x="9.4" y="100.27" font-size="8.3" fill="#bcbcbc" text-anchor="middle" font-family="Liberation Sans">0</text>
<rect x="16.5" y="91.00" width="2" height="1" fill="#6a6a6a"/>
<rect x="16.5" y="97.83" width="2" height="1" fill="#6a6a6a"/>
<rect x="16.5" y="104.67" width="2" height="1" fill="#6a6a6a"/>
<rect x="16.5" y="111.50" width="2" height="1" fill="#6a6a6a"/>
<rect x="0" y="118.33" width="19" height="1" fill="#666"/>
<text x="9.4" y="126.83" font-size="8.3" fill="#bcbcbc" text-anchor="middle" font-family="Liberation Sans">1</text>
<text x="9.4" y="134.43" font-size="8.3" fill="#bcbcbc" text-anchor="middle" font-family="Liberation Sans">0</text>
<text x="9.4" y="142.03" font-size="8.3" fill="#bcbcbc" text-anchor="middle" font-family="Liberation Sans">0</text>
<rect x="16.5" y="125.17" width="2" height="1" fill="#6a6a6a"/>
<rect x="16.5" y="132.00" width="2" height="1" fill="#6a6a6a"/>
<rect x="16.5" y="138.83" width="2" height="1" fill="#6a6a6a"/>
<rect x="16.5" y="145.67" width="2" height="1" fill="#6a6a6a"/>
<rect x="0" y="152.50" width="19" height="1" fill="#666"/>
<text x="9.4" y="161.00" font-size="8.3" fill="#bcbcbc" text-anchor="middle" font-family="Liberation Sans">1</text>
<text x="9.4" y="168.60" font-size="8.3" fill="#bcbcbc" text-anchor="middle" font-family="Liberation Sans">5</text>
<text x="9.4" y="176.20" font-size="8.3" fill="#bcbcbc" text-anchor="middle" font-family="Liberation Sans">0</text>
<rect x="16.5" y="159.33" width="2" height="1" fill="#6a6a6a"/>
<rect x="16.5" y="166.17" width="2" height="1" fill="#6a6a6a"/>
<rect x="16.5" y="173.00" width="2" height="1" fill="#6a6a6a"/>
<rect x="16.5" y="179.83" width="2" height="1" fill="#6a6a6a"/>
<rect x="0" y="186.67" width="19" height="1" fill="#666"/>
<text x="9.4" y="195.17" font-size="8.3" fill="#bcbcbc" text-anchor="middle" font-family="Liberation Sans">2</text>
<text x="9.4" y="202.77" font-size="8.3" fill="#bcbcbc" text-anchor="middle" font-family="Liberation Sans">0</text>
<text x="9.4" y="210.37" font-size="8.3" fill="#bcbcbc" text-anchor="middle" font-family="Liberation Sans">0</text>
<rect x="16.5" y="193.50" width="2" height="1" fill="#6a6a6a"/>
<rect x="16.5" y="200.33" width="2" height="1" fill="#6a6a6a"/>
<rect x="16.5" y="207.17" width="2" height="1" fill="#6a6a6a"/>
<rect x="16.5" y="214.00" width="2" height="1" fill="#6a6a6a"/>
<rect x="0" y="220.83" width="19" height="1" fill="#666"/>
<text x="9.4" y="229.33" font-size="8.3" fill="#bcbcbc" text-anchor="middle" font-family="Liberation Sans">2</text>
<text x="9.4" y="236.93" font-size="8.3" fill="#bcbcbc" text-anchor="middle" font-family="Liberation Sans">5</text>
<text x="9.4" y="244.53" font-size="8.3" fill="#bcbcbc" text-anchor="middle" font-family="Liberation Sans">0</text>
<rect x="16.5" y="227.67" width="2" height="1" fill="#6a6a6a"/>
<rect x="16.5" y="234.50" width="2" height="1" fill="#6a6a6a"/>
<rect x="16.5" y="241.33" width="2" height="1" fill="#6a6a6a"/>
<rect x="16.5" y="248.17" width="2" height="1" fill="#6a6a6a"/>
<rect x="0" y="255.00" width="19" height="1" fill="#666"/>
<text x="9.4" y="263.50" font-size="8.3" fill="#bcbcbc" text-anchor="middle" font-family="Liberation Sans">3</text>
<text x="9.4" y="271.10" font-size="8.3" fill="#bcbcbc" text-anchor="middle" font-family="Liberation Sans">0</text>
<text x="9.4" y="278.70" font-size="8.3" fill="#bcbcbc" text-anchor="middle" font-family="Liberation Sans">0</text>
<rect x="16.5" y="261.83" width="2" height="1" fill="#6a6a6a"/>
<rect x="16.5" y="268.67" width="2" height="1" fill="#6a6a6a"/>
<rect x="16.5" y="275.50" width="2" height="1" fill="#6a6a6a"/>
<rect x="16.5" y="282.33" width="2" height="1" fill="#6a6a6a"/>
<rect x="0" y="289.17" width="19" height="1" fill="#666"/>
<text x="9.4" y="297.67" font-size="8.3" fill="#bcbcbc" text-anchor="middle" font-family="Liberation Sans">3</text>
<text x="9.4" y="305.27" font-size="8.3" fill="#bcbcbc" text-anchor="middle" font-family="Liberation Sans">5</text>
<text x="9.4" y="312.87" font-size="8.3" fill="#bcbcbc" text-anchor="middle" font-family="Liberation Sans">0</text>
<rect x="16.5" y="296.00" width="2" height="1" fill="#6a6a6a"/>
<rect x="16.5" y="302.83" width="2" height="1" fill="#6a6a6a"/>
<rect x="16.5" y="309.67" width="2" height="1" fill="#6a6a6a"/>
<rect x="16.5" y="316.50" width="2" height="1" fill="#6a6a6a"/>
<rect x="0" y="323.33" width="19" height="1" fill="#666"/>
<text x="9.4" y="331.83" font-size="8.3" fill="#bcbcbc" text-anchor="middle" font-family="Liberation Sans">4</text>
<text x="9.4" y="339.43" font-size="8.3" fill="#bcbcbc" text-anchor="middle" font-family="Liberation Sans">0</text>
<text x="9.4" y="347.03" font-size="8.3" fill="#bcbcbc" text-anchor="middle" font-family="Liberation Sans">0</text>
<rect x="16.5" y="330.17" width="2" height="1" fill="#6a6a6a"/>
<rect x="16.5" y="337.00" width="2" height="1" fill="#6a6a6a"/>
<rect x="16.5" y="343.83" width="2" height="1" fill="#6a6a6a"/>
<rect x="16.5" y="350.67" width="2" height="1" fill="#6a6a6a"/>
<rect x="0" y="357.50" width="19" height="1" fill="#666"/>
<text x="9.4" y="366.00" font-size="8.3" fill="#bcbcbc" text-anchor="middle" font-family="Liberation Sans">4</text>
<text x="9.4" y="373.60" font-size="8.3" fill="#bcbcbc" text-anchor="middle" font-family="Liberation Sans">5</text>
<text x="9.4" y="381.20" font-size="8.3" fill="#bcbcbc" text-anchor="middle" font-family="Liberation Sans">0</text>
<rect x="16.5" y="364.33" width="2" height="1" fill="#6a6a6a"/>
<rect x="16.5" y="371.17" width="2" height="1" fill="#6a6a6a"/>
<rect x="16.5" y="378.00" width="2" height="1" fill="#6a6a6a"/>
<rect x="16.5" y="384.83" width="2" height="1" fill="#6a6a6a"/>
<rect x="0" y="391.67" width="19" height="1" fill="#666"/>
<text x="9.4" y="400.17" font-size="8.3" fill="#bcbcbc" text-anchor="middle" font-family="Liberation Sans">5</text>
<text x="9.4" y="407.77" font-size="8.3" fill="#bcbcbc" text-anchor="middle" font-family="Liberation Sans">0</text>
<text x="9.4" y="415.37" font-size="8.3" fill="#bcbcbc" text-anchor="middle" font-family="Liberation Sans">0</text>
<rect x="16.5" y="398.50" width="2" height="1" fill="#6a6a6a"/>
<rect x="16.5" y="405.33" width="2" height="1" fill="#6a6a6a"/>
<rect x="16.5" y="412.17" width="2" height="1" fill="#6a6a6a"/>
<rect x="16.5" y="419.00" width="2" height="1" fill="#6a6a6a"/>
<rect x="0" y="425.83" width="19" height="1" fill="#666"/>
<text x="9.4" y="434.33" font-size="8.3" fill="#bcbcbc" text-anchor="middle" font-family="Liberation Sans">5</text>
<text x="9.4" y="441.93" font-size="8.3" fill="#bcbcbc" text-anchor="middle" font-family="Liberation Sans">5</text>
<text x="9.4" y="449.53" font-size="8.3" fill="#bcbcbc" text-anchor="middle" font-family="Liberation Sans">0</text>
<rect x="16.5" y="432.67" width="2" height="1" fill="#6a6a6a"/>
<rect x="16.5" y="439.50" width="2" height="1" fill="#6a6a6a"/>
<rect x="16.5" y="446.33" width="2" height="1" fill="#6a6a6a"/>
<rect x="16.5" y="453.17" width="2" height="1" fill="#6a6a6a"/>
<rect x="0" y="460.00" width="19" height="1" fill="#666"/>
<text x="9.4" y="468.50" font-size="8.3" fill="#bcbcbc" text-anchor="middle" font-family="Liberation Sans">6</text>
<text x="9.4" y="476.10" font-size="8.3" fill="#bcbcbc" text-anchor="middle" font-family="Liberation Sans">0</text>
<text x="9.4" y="483.70" font-size="8.3" fill="#bcbcbc" text-anchor="middle" font-family="Liberation Sans">0</text>
<rect x="16.5" y="466.83" width="2" height="1" fill="#6a6a6a"/>
<rect x="16.5" y="473.67" width="2" height="1" fill="#6a6a6a"/>
<rect x="16.5" y="480.50" width="2" height="1" fill="#6a6a6a"/>
<rect x="16.5" y="487.33" width="2" height="1" fill="#6a6a6a"/>
<rect x="0" y="494.17" width="19" height="1" fill="#666"/>
<text x="9.4" y="502.67" font-size="8.3" fill="#bcbcbc" text-anchor="middle" font-family="Liberation Sans">6</text>
<text x="9.4" y="510.27" font-size="8.3" fill="#bcbcbc" text-anchor="middle" font-family="Liberation Sans">5</text>
<text x="9.4" y="517.87" font-size="8.3" fill="#bcbcbc" text-anchor="middle" font-family="Liberation Sans">0</text>
<rect x="16.5" y="501.00" width="2" height="1" fill="#6a6a6a"/>
<rect x="16.5" y="507.83" width="2" height="1" fill="#6a6a6a"/>
<rect x="16.5" y="514.67" width="2" height="1" fill="#6a6a6a"/>
<rect x="16.5" y="521.50" width="2" height="1" fill="#6a6a6a"/>
<rect x="0" y="528.33" width="19" height="1" fill="#666"/>
<text x="9.4" y="536.83" font-size="8.3" fill="#bcbcbc" text-anchor="middle" font-family="Liberation Sans">7</text>
<text x="9.4" y="544.43" font-size="8.3" fill="#bcbcbc" text-anchor="middle" font-family="Liberation Sans">0</text>
<text x="9.4" y="552.03" font-size="8.3" fill="#bcbcbc" text-anchor="middle" font-family="Liberation Sans">0</text>
<rect x="16.5" y="535.17" width="2" height="1" fill="#6a6a6a"/>
<rect x="16.5" y="542.00" width="2" height="1" fill="#6a6a6a"/>
<rect x="16.5" y="548.83" width="2" height="1" fill="#6a6a6a"/>
<rect x="16.5" y="555.67" width="2" height="1" fill="#6a6a6a"/>
<rect x="0" y="562.50" width="19" height="1" fill="#666"/>
<text x="9.4" y="571.00" font-size="8.3" fill="#bcbcbc" text-anchor="middle" font-family="Liberation Sans">7</text>
<text x="9.4" y="578.60" font-size="8.3" fill="#bcbcbc" text-anchor="middle" font-family="Liberation Sans">5</text>
<text x="9.4" y="586.20" font-size="8.3" fill="#bcbcbc" text-anchor="middle" font-family="Liberation Sans">0</text>
<rect x="16.5" y="569.33" width="2" height="1" fill="#6a6a6a"/>
<rect x="16.5" y="576.17" width="2" height="1" fill="#6a6a6a"/>
<rect x="16.5" y="583.00" width="2" height="1" fill="#6a6a6a"/>
<rect x="16.5" y="589.83" width="2" height="1" fill="#6a6a6a"/>
<rect x="0" y="596.67" width="19" height="1" fill="#666"/>
<text x="9.4" y="605.17" font-size="8.3" fill="#bcbcbc" text-anchor="middle" font-family="Liberation Sans">8</text>
<text x="9.4" y="612.77" font-size="8.3" fill="#bcbcbc" text-anchor="middle" font-family="Liberation Sans">0</text>
<text x="9.4" y="620.37" font-size="8.3" fill="#bcbcbc" text-anchor="middle" font-family="Liberation Sans">0</text>
<rect x="16.5" y="603.50" width="2" height="1" fill="#6a6a6a"/>
<rect x="16.5" y="610.33" width="2" height="1" fill="#6a6a6a"/>
<rect x="16.5" y="617.17" width="2" height="1" fill="#6a6a6a"/>
<rect x="16.5" y="624.00" width="2" height="1" fill="#6a6a6a"/>
<rect x="0" y="630.83" width="19" height="1" fill="#666"/>
<text x="9.4" y="639.33" font-size="8.3" fill="#bcbcbc" text-anchor="middle" font-family="Liberation Sans">8</text>
<text x="9.4" y="646.93" font-size="8.3" fill="#bcbcbc" text-anchor="middle" font-family="Liberation Sans">5</text>
<text x="9.4" y="654.53" font-size="8.3" fill="#bcbcbc" text-anchor="middle" font-family="Liberation Sans">0</text>
<rect x="16.5" y="637.67" width="2" height="1" fill="#6a6a6a"/>
<rect x="16.5" y="644.50" width="2" height="1" fill="#6a6a6a"/>
<rect x="16.5" y="651.33" width="2" height="1" fill="#6a6a6a"/>
<rect x="16.5" y="658.17" width="2" height="1" fill="#6a6a6a"/>
<rect x="0" y="665.00" width="19" height="1" fill="#666"/>
<text x="9.4" y="673.50" font-size="8.3" fill="#bcbcbc" text-anchor="middle" font-family="Liberation Sans">9</text>
<text x="9.4" y="681.10" font-size="8.3" fill="#bcbcbc" text-anchor="middle" font-family="Liberation Sans">0</text>
<text x="9.4" y="688.70" font-size="8.3" fill="#bcbcbc" text-anchor="middle" font-family="Liberation Sans">0</text>
<rect x="16.5" y="671.83" width="2" height="1" fill="#6a6a6a"/>
<rect x="16.5" y="678.67" width="2" height="1" fill="#6a6a6a"/>
<rect x="16.5" y="685.50" width="2" height="1" fill="#6a6a6a"/>
<rect x="16.5" y="692.33" width="2" height="1" fill="#6a6a6a"/>
<rect x="0" y="699.17" width="19" height="1" fill="#666"/>
<text x="9.4" y="707.67" font-size="8.3" fill="#bcbcbc" text-anchor="middle" font-family="Liberation Sans">9</text>
<text x="9.4" y="715.27" font-size="8.3" fill="#bcbcbc" text-anchor="middle" font-family="Liberation Sans">5</text>
<text x="9.4" y="722.87" font-size="8.3" fill="#bcbcbc" text-anchor="middle" font-family="Liberation Sans">0</text>
<rect x="16.5" y="706.00" width="2" height="1" fill="#6a6a6a"/>
<rect x="16.5" y="712.83" width="2" height="1" fill="#6a6a6a"/>
<rect x="16.5" y="719.67" width="2" height="1" fill="#6a6a6a"/>
<rect x="16.5" y="726.50" width="2" height="1" fill="#6a6a6a"/>
<rect x="0" y="733.33" width="19" height="1" fill="#666"/>
<text x="9.4" y="741.83" font-size="8.3" fill="#bcbcbc" text-anchor="middle" font-family="Liberation Sans">1</text>
<text x="9.4" y="749.43" font-size="8.3" fill="#bcbcbc" text-anchor="middle" font-family="Liberation Sans">0</text>
<text x="9.4" y="757.03" font-size="8.3" fill="#bcbcbc" text-anchor="middle" font-family="Liberation Sans">0</text>
<text x="9.4" y="764.63" font-size="8.3" fill="#bcbcbc" text-anchor="middle" font-family="Liberation Sans">0</text>
<rect x="16.5" y="740.17" width="2" height="1" fill="#6a6a6a"/>
<rect x="16.5" y="747.00" width="2" height="1" fill="#6a6a6a"/>
<rect x="16.5" y="753.83" width="2" height="1" fill="#6a6a6a"/>
<rect x="16.5" y="760.67" width="2" height="1" fill="#6a6a6a"/>
<rect x="0" y="767.50" width="19" height="1" fill="#666"/>
<text x="9.4" y="776.00" font-size="8.3" fill="#bcbcbc" text-anchor="middle" font-family="Liberation Sans">1</text>
<text x="9.4" y="783.60" font-size="8.3" fill="#bcbcbc" text-anchor="middle" font-family="Liberation Sans">0</text>
<text x="9.4" y="791.20" font-size="8.3" fill="#bcbcbc" text-anchor="middle" font-family="Liberation Sans">5</text>
<text x="9.4" y="798.80" font-size="8.3" fill="#bcbcbc" text-anchor="middle" font-family="Liberation Sans">0</text>
<rect x="16.5" y="774.33" width="2" height="1" fill="#6a6a6a"/>
<rect x="16.5" y="781.17" width="2" height="1" fill="#6a6a6a"/>
</svg>

<!-- pasteboard -->
<div class="a" style="left:62px;top:107px;width:1120px;height:784px;background:#282828"></div>
<div class="a" style="left:110px;top:157px;width:1025px;height:684px;background:#ffffff"></div>
<!-- guides -->
<div class="a" style="left:451px;top:107px;width:2px;height:784px;background:#80fcfc"></div>
<div class="a" style="left:62px;top:396px;width:1120px;height:1px;background:#1414ff"></div>
<div class="a" style="left:62px;top:397px;width:1120px;height:1px;background:#a8a8ff"></div>
<!-- scrollbars / status -->
<div class="a" style="left:1182px;top:107px;width:17px;height:784px;background:#4d4d4d"></div>
<div class="a" style="left:1185.5px;top:330px;width:11px;height:308px;border-radius:5.5px;background:#6a6a6a"></div>
<div class="a" style="left:43px;top:891px;width:1139px;height:17px;background:#494949"></div>
<div class="a" style="left:1182px;top:891px;width:17px;height:17px;background:#4d4d4d"></div>
<div class="a" style="left:105px;top:891px;width:191px;height:17px;background:#535353"></div>
<div class="a" style="left:575px;top:894px;width:322px;height:11px;border-radius:5.5px;background:#6c6c6c"></div>
<div class="t" style="left:54px;top:894px;font-size:10.6px;letter-spacing:-0.3px;color:#f2f2f2">131,12%</div>
<div class="t" style="left:127px;top:894px;font-size:11.1px;color:#e0e0e0">1500 px x 1000 px (72 ppi)</div>
<svg class="a" style="left:283px;top:891px" width="12" height="16"><path d="M3.5 4 L7.5 8.5 L3.5 13" stroke="#d8d8d8" stroke-width="1.1" fill="none"/></svg>

<!-- dialog -->
<div class="a" style="left:561px;top:321px;width:378px;height:237px;border-radius:10px 10px 9px 9px;background:#535353;box-shadow:0 20px 40px rgba(0,0,0,0.30),0 4px 22px rgba(0,0,0,0.16)"></div>
<div class="a" style="left:561px;top:321px;width:378px;height:29px;border-radius:10px 10px 0 0;background:#d6d7d8;border-bottom:1px solid #e4e4e4"></div>
<div class="t" style="left:715px;top:328.5px;font-size:14px;font-weight:700;-webkit-text-stroke:0;color:#262626">New guide</div>
<svg class="a" style="left:561px;top:350px" width="378" height="208">
 <!-- orientation group -->
 <path d="M24 20.5 L12.5 20.5 L12.5 119.5 L288.5 119.5 L288.5 20.5 L103 20.5" stroke="#464646" stroke-width="1" fill="none"/>
 <path d="M24 21.5 L13.5 21.5 L13.5 118.5 M13.5 118.5 L287.5 118.5 L287.5 21.5 L103 21.5" stroke="#5c5c5c" stroke-width="1" fill="none" opacity="0.5"/>
 <!-- color group -->
 <path d="M24 138.5 L12.5 138.5 L12.5 195.5 L288.5 195.5 L288.5 138.5 L68 138.5" stroke="#464646" stroke-width="1" fill="none"/>
 <path d="M24 139.5 L13.5 139.5 L13.5 194.5 L287.5 194.5 L287.5 139.5 L68 139.5" stroke="#5c5c5c" stroke-width="1" fill="none" opacity="0.5"/>
 <!-- radios -->
 <circle cx="29" cy="45.7" r="6.3" fill="#4b4b4b" stroke="#717171" stroke-width="1"/>
 <circle cx="29" cy="74" r="6.8" fill="#e2e2e2"/>
 <circle cx="29" cy="74" r="2.6" fill="#1e1e1e"/>
 <!-- position input -->
 <rect x="77.5" y="92.5" width="61" height="18.5" fill="#424242" stroke="#3466d8" stroke-width="1.3"/>
 <!-- dropdown -->
 <rect x="22.5" y="160.5" width="218.5" height="20.5" rx="2" fill="#434343" stroke="#626262" stroke-width="1.2"/>
 <rect x="30" y="164" width="16.5" height="14.5" fill="#6ff2f8"/>
 <path d="M231 170 L234 173 L237 170" stroke="#e8e8e8" stroke-width="1.3" fill="none"/>
 <rect x="245.5" y="154.3" width="33" height="33" fill="#4dffff" stroke="#4a2a2a" stroke-width="1"/>
 <!-- buttons -->
 <rect x="305.5" y="18.5" width="61.5" height="27" rx="13.5" fill="#535353" stroke="#e4e4e4" stroke-width="1.6"/>
 <rect x="305.5" y="55.5" width="61.5" height="26.5" rx="13.25" fill="#535353" stroke="#797979" stroke-width="1.2"/>
</svg>
<div class="t" style="left:593px;top:362px;font-size:13.2px;color:#ececec">Orientation</div>
<div class="t" style="left:606.5px;top:388.5px;font-size:13.3px;color:#f0f0f0">Horizontal</div>
<div class="t" style="left:606.5px;top:416.5px;font-size:13.4px;color:#f0f0f0">Vertical</div>
<div class="t" style="left:584px;top:444.5px;font-size:13px;color:#dedede">Position:</div>
<div class="t" style="left:642px;top:444.5px;font-size:13.3px;color:#f4f4f4">350px</div>
<div class="t" style="left:593px;top:481px;font-size:13px;color:#ececec">Color</div>
<div class="t" style="left:608.5px;top:514px;font-size:12.6px;color:#f4f4f4">Cyan</div>
<div class="t" style="left:888px;top:374.5px;font-size:12.5px;color:#f4f4f4">OK</div>
<div class="t" style="left:877px;top:411px;font-size:13px;color:#f0f0f0">Cancel</div>

<!-- right icon strip -->
<div class="a" style="left:1199px;top:56px;width:301px;height:851px;background:#3a3a3a"></div>
<div class="a" style="left:1202px;top:56px;width:298px;height:13px;background:#424242"></div>
<svg class="a" style="left:1199px;top:56px" width="301" height="14">
 <path d="M35 3.5 L32.5 6 L35 8.5 M39 3.5 L36.5 6 L39 8.5" stroke="#e0e0e0" stroke-width="1.2" fill="none"/>
 <path d="M286 3.5 L288.5 6 L286 8.5 M290 3.5 L292.5 6 L290 8.5" stroke="#e0e0e0" stroke-width="1.2" fill="none"/>
</svg>
<svg class="a" style="left:1199px;top:69px" width="44" height="838">
 <rect x="3" y="1" width="38" height="837" fill="#535353"/>
 <g fill="#4a4a4a">
  <rect x="3" y="42" width="38" height="2"/><rect x="3" y="113" width="38" height="2"/><rect x="3" y="155" width="38" height="2"/>
  <rect x="3" y="228.5" width="38" height="2"/><rect x="3" y="300.5" width="38" height="2"/><rect x="3" y="342.5" width="38" height="2"/>
  <rect x="3" y="386" width="38" height="2"/><rect x="3" y="428" width="38" height="2"/>
 </g>
 <g stroke="#454545" stroke-width="0.8">
  <path d="M14.5 5v3M16.5 5v3M18.5 5v3M20.5 5v3M22.5 5v3M24.5 5v3M26.5 5v3M28.5 5v3"/>
  <path d="M14.5 48v3M16.5 48v3M18.5 48v3M20.5 48v3M22.5 48v3M24.5 48v3M26.5 48v3M28.5 48v3"/>
  <path d="M14.5 119v3M16.5 119v3M18.5 119v3M20.5 119v3M22.5 119v3M24.5 119v3M26.5 119v3M28.5 119v3"/>
  <path d="M14.5 163v3M16.5 163v3M18.5 163v3M20.5 163v3M22.5 163v3M24.5 163v3M26.5 163v3M28.5 163v3"/>
  <path d="M14.5 235v3M16.5 235v3M18.5 235v3M20.5 235v3M22.5 235v3M24.5 235v3M26.5 235v3M28.5 235v3"/>
  <path d="M14.5 306v3M16.5 306v3M18.5 306v3M20.5 306v3M22.5 306v3M24.5 306v3M26.5 306v3M28.5 306v3"/>
  <path d="M14.5 349v3M16.5 349v3M18.5 349v3M20.5 349v3M22.5 349v3M24.5 349v3M26.5 349v3M28.5 349v3"/>
  <path d="M14.5 391.5v3M16.5 391.5v3M18.5 391.5v3M20.5 391.5v3M22.5 391.5v3M24.5 391.5v3M26.5 391.5v3M28.5 391.5v3"/>
 </g>
</svg>
<svg class="a" style="left:1199px;top:0" width="44" height="910">
 <!-- play -->
 <path d="M16.5 85 L30.5 93.5 L16.5 102 Z" fill="#e6e6e6"/>
 <!-- brush list -->
 <g fill="#e6e6e6"><circle cx="13" cy="128" r="1.2"/><circle cx="13" cy="131.5" r="1.2"/><circle cx="13" cy="135" r="1.2"/>
  <rect x="15.5" y="127.3" width="4" height="1.4"/><rect x="15.5" y="130.8" width="4" height="1.4"/><rect x="15.5" y="134.3" width="4" height="1.4"/></g>
 <path d="M33.5 130.5 L24.5 139.5" stroke="#e6e6e6" stroke-width="2.4" stroke-linecap="round"/>
 <path d="M23.5 138.5 C20 139 19 142 17.5 145 C21.5 145 24.5 144 25.3 140.5Z" fill="#e6e6e6"/>
 <!-- brush settings -->
 <path d="M13 159.5 C15 157.5 18 157 21 157.8 C22.5 158.5 22.5 160.5 21 161.2 C18 162 15 161.5 13 159.5Z" fill="#e6e6e6"/>
 <rect x="22.5" y="158.8" width="10" height="1.8" fill="#e6e6e6"/>
 <rect x="14" y="167.3" width="11" height="1.8" fill="#e6e6e6"/>
 <path d="M25.5 168 L32 162 C34 164 34 172 32 174 Z" fill="#e6e6e6"/>
 <!-- stamp list -->
 <g fill="#e6e6e6"><circle cx="13" cy="199" r="1.2"/><circle cx="13" cy="202.5" r="1.2"/><circle cx="13" cy="206" r="1.2"/>
  <rect x="15.5" y="198.3" width="4" height="1.4"/><rect x="15.5" y="201.8" width="4" height="1.4"/><rect x="15.5" y="205.3" width="4" height="1.4"/>
  <circle cx="26.5" cy="204.5" r="3" /><rect x="25.2" y="206" width="2.6" height="3.5"/><rect x="19.5" y="209.5" width="14" height="3.4" rx="1"/><rect x="20.5" y="214" width="12" height="1.3"/></g>
 <!-- A| -->
 <text x="14.5" y="256" font-size="17" font-family="Liberation Sans" fill="#e6e6e6">A</text>
 <rect x="28.3" y="242.5" width="1.2" height="14" fill="#e6e6e6"/>
 <!-- pilcrow -->
 <path d="M22.5 273 L28.5 273 M25.8 273 L25.8 288 M23.2 273 L23.2 288" stroke="#e6e6e6" stroke-width="1.3"/>
 <path d="M23.2 273 C18 273 16.5 276 16.5 278 C16.5 280.5 18.5 282.5 23.2 282.5Z" fill="#e6e6e6"/>
 <!-- pilcrow boxes -->
 <path d="M22.5 314.5 L29.5 314.5 M27.3 314.5 L27.3 328.5 M24.8 314.5 L24.8 328.5" stroke="#e6e6e6" stroke-width="1.2"/>
 <path d="M24.8 314.5 C20.5 314.5 19.5 317 19.5 318.8 C19.5 321 21 323 24.8 323Z" fill="#e6e6e6"/>
 <rect x="13.5" y="324.5" width="6" height="5.5" fill="none" stroke="#e6e6e6" stroke-width="1.1"/><rect x="17" y="328" width="5.5" height="5.5" fill="#e6e6e6"/>
 <!-- A boxes -->
 <text x="19.3" y="357.5" font-size="15" font-family="Liberation Sans" fill="#e6e6e6">A</text>
 <rect x="13.5" y="351" width="6" height="5.5" fill="none" stroke="#e6e6e6" stroke-width="1.1"/><rect x="17" y="354.5" width="5.5" height="5.5" fill="#e6e6e6"/>
 <!-- cube -->
 <path d="M22.5 385 L30.5 389.5 L30.5 398.5 L22.5 403 L14.5 398.5 L14.5 389.5 Z" fill="#6d6d6d" stroke="#e6e6e6" stroke-width="1.3" stroke-linejoin="round"/>
 <path d="M14.5 389.5 L22.5 394 L30.5 389.5 M22.5 394 L22.5 403" stroke="#e6e6e6" stroke-width="1.2" fill="none"/>
 <path d="M22.5 394 L30.5 389.5 L30.5 398.5 L22.5 403Z" fill="#4a4a4a"/>
 <!-- grid -->
 <rect x="14" y="429" width="17" height="13.5" fill="#f0f0f0"/>
 <g stroke="#1e1e1e" stroke-width="1.4" fill="none" stroke-dasharray="1.8 1"><path d="M19.5 430 L19.5 441.5 M25.5 430 L25.5 441.5 M15 433.8 L30 433.8 M15 438 L30 438"/></g>
 <!-- script A -->
 <text x="13.5" y="487.5" font-size="19" font-family="Liberation Serif" font-style="italic" fill="#e6e6e6">A</text>
</svg>

<!-- properties panel -->
<div class="a" style="left:1243px;top:69px;width:255px;height:29px;background:#424242"></div>
<div class="a" style="left:1243px;top:70px;width:36px;height:28px;background:#474747"></div>
<div class="a" style="left:1280px;top:70px;width:34px;height:28px;background:#474747"></div>
<div class="a" style="left:1315px;top:70px;width:34px;height:28px;background:#474747"></div>
<div class="a" style="left:1350px;top:70px;width:35px;height:28px;background:#474747"></div>
<div class="a" style="left:1386px;top:70px;width:73px;height:28px;background:#535353"></div>
<div class="a" style="left:1243px;top:98px;width:255px;height:321px;background:#535353"></div>
<div class="t" style="left:1253px;top:78px;font-size:11px;font-weight:700;-webkit-text-stroke:0;color:#c6c6c6;width:26px;overflow:hidden">Libra</div>
<div class="t" style="left:1289px;top:78px;font-size:11px;font-weight:700;-webkit-text-stroke:0;color:#c6c6c6;width:25px;overflow:hidden">Histo</div>
<div class="t" style="left:1324px;top:78px;font-size:11px;font-weight:700;-webkit-text-stroke:0;color:#c6c6c6;width:25px;overflow:hidden">Navig</div>
<div class="t" style="left:1359px;top:78px;font-size:11px;font-weight:700;-webkit-text-stroke:0;color:#c6c6c6;width:26px;overflow:hidden">Adjus</div>
<div class="t" style="left:1395px;top:78px;font-size:11px;font-weight:700;-webkit-text-stroke:0;color:#f4f4f4">Properties</div>
<svg class="a" style="left:1243px;top:69px" width="257" height="352">
 <g fill="#bdbdbd"><rect x="240" y="11" width="11" height="1.2"/><rect x="240" y="13" width="11" height="1.2"/><rect x="240" y="15" width="11" height="1.2"/><rect x="240" y="17" width="11" height="1.2"/><rect x="240" y="19" width="11" height="1.2"/></g>
 <!-- doc icon -->
 <rect x="12.5" y="35.5" width="22.5" height="23" rx="2" fill="#3b3b3b"/>
 <path d="M19 40.5 L25.5 40.5 L28.5 43.5 L28.5 53.5 L19 53.5 Z M25.5 40.5 L25.5 43.5 L28.5 43.5" stroke="#e8e8e8" stroke-width="1.1" fill="none" stroke-linejoin="round"/>
 <rect x="0" y="64" width="255" height="2" fill="#4a4a4a"/>
 <!-- chevron canvas -->
 <path d="M8.5 79 L12 82.5 L15.5 79" stroke="#d0d0d0" stroke-width="1.2" fill="none"/>
 <!-- W input -->
 <rect x="68.5" y="97.5" width="54" height="15.5" fill="#3d3d3d" stroke="#474747"/>
 <rect x="68.5" y="122.5" width="54" height="15.5" fill="#3d3d3d" stroke="#474747"/>
 <rect x="150.5" y="97.5" width="54" height="15.5" fill="#505050" stroke="#5c5c5c"/>
 <rect x="150.5" y="122.5" width="54" height="15.5" fill="#505050" stroke="#5c5c5c"/>
 <!-- link -->
 <g stroke="#e6e6e6" stroke-width="1.5" fill="none"><path d="M22.2 116 L22.2 112.5 C22.2 109.6 26.8 109.6 26.8 112.5 L26.8 114.5"/><path d="M26.8 117.5 L26.8 121 C26.8 123.9 22.2 123.9 22.2 121 L22.2 119"/><path d="M24.5 114 L24.5 119.5"/></g>
 <!-- orientation icons -->
 <rect x="74.5" y="155" width="15" height="16.5" fill="none" stroke="#dcdcdc" stroke-width="1.2"/>
 <circle cx="82" cy="159.5" r="1.8" fill="#dcdcdc"/><path d="M78.5 170.5 L78.5 164.5 C78.5 162 85.5 162 85.5 164.5 L85.5 170.5Z" fill="#dcdcdc"/>
 <rect x="96.5" y="151" width="24.5" height="24.5" rx="2" fill="#3a3a3a"/>
 <rect x="101.5" y="156" width="15" height="13.5" fill="none" stroke="#dcdcdc" stroke-width="1.2"/>
 <circle cx="109" cy="159.5" r="1.8" fill="#dcdcdc"/><path d="M104.5 169 L104.5 165 C104.5 162 113.5 162 113.5 165 L113.5 169Z" fill="#dcdcdc"/>
 <!-- dropdowns -->
 <rect x="68.5" y="211.5" width="136" height="18" rx="2" fill="#424242" stroke="#4e4e4e"/>
 <rect x="68.5" y="238.5" width="136" height="19" rx="2" fill="#424242" stroke="#4e4e4e"/>
 <rect x="69" y="270" width="16.5" height="16.5" fill="#ffffff"/>
 <rect x="91.5" y="268.5" width="113" height="19" rx="2" fill="#424242" stroke="#4e4e4e"/>
 <g stroke="#e0e0e0" stroke-width="1.2" fill="none"><path d="M194 219 L197 222 L200 219"/><path d="M194 246.5 L197 249.5 L200 246.5"/><path d="M194 276.5 L197 279.5 L200 276.5"/></g>
 <rect x="0" y="298" width="240" height="1.5" fill="#474747"/>
 <path d="M8.5 313 L12 316.5 L15.5 313" stroke="#d0d0d0" stroke-width="1.2" fill="none"/>
 <!-- scrollbar -->
 <rect x="240" y="66" width="15" height="258" fill="#4a4a4a"/>
 <rect x="243" y="68" width="10.5" height="139" rx="5.25" fill="#5e5e5e"/>
</svg>
<div class="t" style="left:1283.5px;top:112px;font-size:11.2px;color:#e4e4e4">Document</div>
<div class="t" style="left:1265.5px;top:145px;font-size:10.8px;font-weight:700;-webkit-text-stroke:0;color:#ececec">Canvas</div>
<div class="t" style="left:1296px;top:169px;font-size:11px;color:#cfcfcf">W</div>
<div class="t" style="left:1298px;top:194px;font-size:11px;color:#cfcfcf">H</div>
<div class="t" style="left:1380px;top:169px;font-size:11px;color:#cfcfcf">X</div>
<div class="t" style="left:1380px;top:194px;font-size:11px;color:#cfcfcf">Y</div>
<div class="t" style="left:1314.5px;top:169px;font-size:11px;color:#f0f0f0">1500 px</div>
<div class="t" style="left:1314.5px;top:194px;font-size:11px;color:#f0f0f0">1000 px</div>
<div class="t" style="left:1396px;top:169px;font-size:11px;color:#6c6c6c">0 px</div>
<div class="t" style="left:1396px;top:194px;font-size:11px;color:#6c6c6c">0 px</div>
<div class="t" style="left:1311.5px;top:257px;font-size:11.2px;color:#dadada">Resolution: 72 pixels/inch</div>
<div class="t" style="left:1277.5px;top:285px;font-size:11px;color:#d0d0d0">Mode</div>
<div class="t" style="left:1319px;top:285px;font-size:10.8px;color:#ececec">RGB Color</div>
<div class="t" style="left:1319px;top:312px;font-size:11.2px;color:#ececec">8 Bits/Channel</div>
<div class="t" style="left:1291.5px;top:342px;font-size:11px;color:#d0d0d0">Fill</div>
<div class="t" style="left:1342px;top:342px;font-size:11.2px;color:#ececec">White</div>
<div class="t" style="left:1265.5px;top:379px;font-size:11px;font-weight:700;-webkit-text-stroke:0;color:#ececec">Rulers &amp; Grids</div>

<!-- history panel -->
<div class="a" style="left:1243px;top:422px;width:255px;height:29px;background:#434343"></div>
<div class="a" style="left:1243px;top:423px;width:59px;height:29px;background:#535353"></div>
<div class="a" style="left:1303px;top:423px;width:48px;height:28px;background:#474747"></div>
<div class="a" style="left:1352px;top:423px;width:62px;height:28px;background:#474747"></div>
<div class="a" style="left:1415px;top:423px;width:44px;height:28px;background:#474747"></div>
<div class="a" style="left:1243px;top:451px;width:255px;height:456px;background:#4c4c4c"></div>
<div class="a" style="left:1243px;top:452px;width:239px;height:180px;background:#505050"></div>
<div class="t" style="left:1253px;top:431px;font-size:11px;font-weight:700;-webkit-text-stroke:0;color:#f4f4f4">History</div>
<div class="t" style="left:1311px;top:431px;font-size:11px;font-weight:700;-webkit-text-stroke:0;color:#c6c6c6">Layers</div>
<div class="t" style="left:1360px;top:431px;font-size:11px;font-weight:700;-webkit-text-stroke:0;color:#c6c6c6">Channels</div>
<div class="t" style="left:1423px;top:431px;font-size:11px;font-weight:700;-webkit-text-stroke:0;color:#c6c6c6">Paths</div>
<svg class="a" style="left:1243px;top:422px" width="257" height="488">
 <g fill="#bdbdbd"><rect x="240" y="11" width="11" height="1.2"/><rect x="240" y="13" width="11" height="1.2"/><rect x="240" y="15" width="11" height="1.2"/><rect x="240" y="17" width="11" height="1.2"/><rect x="240" y="19" width="11" height="1.2"/></g>
 <rect x="239" y="35" width="16" height="426" fill="#4b4b4b"/>
 <!-- snapshot row -->
 <rect x="0" y="64.5" width="239" height="1.3" fill="#6a6a6a"/>
 <rect x="27" y="37.8" width="33" height="22.5" rx="2" fill="#ffffff" stroke="#262626" stroke-width="1.6"/>
 <path d="M20 42.5 L14.5 49" stroke="#ececec" stroke-width="2.6" stroke-linecap="round"/>
 <path d="M14.5 48 C11 48.5 9.5 52 8 55.5 C12 55.5 15 54 16 50.5Z" fill="#ececec"/>
 <path d="M5 47.5 L8.5 44.5 L9.5 48Z" fill="#ececec"/>
 <path d="M8 46 C10 44.5 12.5 44.3 14 45" stroke="#dcdcdc" stroke-width="0.9" fill="none"/>
 <g fill="#dcdcdc"><circle cx="19.6" cy="48.5" r="0.8"/><circle cx="19.6" cy="50.8" r="0.8"/><circle cx="18.3" cy="53.2" r="0.8"/><circle cx="16.3" cy="55.3" r="0.8"/></g>
 <!-- rows -->
 <rect x="0" y="186" width="239" height="24" fill="#6b6b6b"/>
 <g fill="#464646"><rect x="0" y="90" width="239" height="1"/><rect x="0" y="114" width="239" height="1"/><rect x="0" y="138" width="239" height="1"/><rect x="0" y="162" width="239" height="1"/><rect x="0" y="186" width="239" height="1"/></g>
 <g fill="none" stroke="#454545" stroke-width="1.2"><rect x="7.5" y="72.5" width="11" height="11"/><rect x="7.5" y="96.5" width="11" height="11"/><rect x="7.5" y="120.5" width="11" height="11"/><rect x="7.5" y="144.5" width="11" height="11"/><rect x="7.5" y="168.5" width="11" height="11"/></g>
 <rect x="7.5" y="192.5" width="11" height="11" fill="none" stroke="#5e5e5e" stroke-width="1.2"/>
 <g><rect x="34" y="71" width="9.5" height="3" fill="#ececec"/>
<rect x="34.6" y="73.6" width="13.8" height="12.6" rx="1.2" fill="#3a3a3a" stroke="#e6e6e6" stroke-width="1.5"/>
<rect x="36.6" y="76.2" width="9.8" height="1.2" fill="#d8d8d8"/>
<rect x="36.6" y="78.3" width="9.8" height="1.2" fill="#d8d8d8"/>
<rect x="36.6" y="80.4" width="9.8" height="1.2" fill="#d8d8d8"/>
<rect x="36.6" y="82.5" width="9.8" height="1.2" fill="#d8d8d8"/>
<rect x="34" y="95" width="9.5" height="3" fill="#ececec"/>
<rect x="34.6" y="97.6" width="13.8" height="12.6" rx="1.2" fill="#3a3a3a" stroke="#e6e6e6" stroke-width="1.5"/>
<rect x="36.6" y="100.2" width="9.8" height="1.2" fill="#d8d8d8"/>
<rect x="36.6" y="102.3" width="9.8" height="1.2" fill="#d8d8d8"/>
<rect x="36.6" y="104.4" width="9.8" height="1.2" fill="#d8d8d8"/>
<rect x="36.6" y="106.5" width="9.8" height="1.2" fill="#d8d8d8"/>
<rect x="34" y="119" width="9.5" height="3" fill="#ececec"/>
<rect x="34.6" y="121.6" width="13.8" height="12.6" rx="1.2" fill="#3a3a3a" stroke="#e6e6e6" stroke-width="1.5"/>
<rect x="36.6" y="124.2" width="9.8" height="1.2" fill="#d8d8d8"/>
<rect x="36.6" y="126.3" width="9.8" height="1.2" fill="#d8d8d8"/>
<rect x="36.6" y="128.4" width="9.8" height="1.2" fill="#d8d8d8"/>
<rect x="36.6" y="130.5" width="9.8" height="1.2" fill="#d8d8d8"/>
<rect x="34" y="143" width="9.5" height="3" fill="#ececec"/>
<rect x="34.6" y="145.6" width="13.8" height="12.6" rx="1.2" fill="#3a3a3a" stroke="#e6e6e6" stroke-width="1.5"/>
<rect x="36.6" y="148.2" width="9.8" height="1.2" fill="#d8d8d8"/>
<rect x="36.6" y="150.3" width="9.8" height="1.2" fill="#d8d8d8"/>
<rect x="36.6" y="152.4" width="9.8" height="1.2" fill="#d8d8d8"/>
<rect x="36.6" y="154.5" width="9.8" height="1.2" fill="#d8d8d8"/>
<rect x="34" y="167" width="9.5" height="3" fill="#ececec"/>
<rect x="34.6" y="169.6" width="13.8" height="12.6" rx="1.2" fill="#3a3a3a" stroke="#e6e6e6" stroke-width="1.5"/>
<rect x="36.6" y="172.2" width="9.8" height="1.2" fill="#d8d8d8"/>
<rect x="36.6" y="174.3" width="9.8" height="1.2" fill="#d8d8d8"/>
<rect x="36.6" y="176.4" width="9.8" height="1.2" fill="#d8d8d8"/>
<rect x="36.6" y="178.5" width="9.8" height="1.2" fill="#d8d8d8"/>
<rect x="34" y="191" width="9.5" height="3" fill="#ececec"/>
<rect x="34.6" y="193.6" width="13.8" height="12.6" rx="1.2" fill="#3a3a3a" stroke="#e6e6e6" stroke-width="1.5"/>
<rect x="36.6" y="196.2" width="9.8" height="1.2" fill="#d8d8d8"/>
<rect x="36.6" y="198.3" width="9.8" height="1.2" fill="#d8d8d8"/>
<rect x="36.6" y="200.4" width="9.8" height="1.2" fill="#d8d8d8"/>
<rect x="36.6" y="202.5" width="9.8" height="1.2" fill="#d8d8d8"/></g>
 <rect x="0" y="461" width="255" height="1" fill="#3d3d3d"/>
 <rect x="0" y="462" width="255" height="23" fill="#525252"/>
 <!-- footer icons -->
 <g fill="#e6e6e6">
  <path d="M152 466.5 L158 466.5 L161 469.5 L161 478 L152 478 Z"/>
  <path d="M164.5 469 L170 469 L170 468 L172 468 L172 466.5 L175.5 466.5 L175.5 478 L168 478 L168 472.5 L164.5 472.5Z" fill="none"/>
  <rect x="183" y="469" width="14" height="9.5" rx="1.5"/><rect x="187" y="467" width="6" height="3" rx="1"/>
  <rect x="213.5" y="468" width="11" height="1.5"/><rect x="217" y="466" width="4" height="2"/><path d="M214.5 470 L223.5 470 L222.8 479 L215.2 479Z"/>
 </g>
 <circle cx="190" cy="473.5" r="2.8" fill="#535353"/><circle cx="190" cy="473.5" r="1.6" fill="#e6e6e6"/>
 <g stroke="#535353" stroke-width="0.8"><path d="M217 471v7M219 471v7M221 471v7"/></g>
 <path d="M147.5 474.8 L155 474.8 M151.3 471 L151.3 478.6" stroke="#525252" stroke-width="4.2"/>
 <path d="M147.5 474.8 L155 474.8 M151.3 471 L151.3 478.6" stroke="#ececec" stroke-width="2.1"/>
</svg>
<div class="t" style="left:1307.5px;top:464px;font-size:11.5px;color:#ececec">Untitled-1</div>
<div class="t" style="left:1303px;top:494px;font-size:11px;color:#ececec">New</div>
<div class="t" style="left:1303px;top:518px;font-size:11px;color:#ececec">New Guide</div>
<div class="t" style="left:1303px;top:542px;font-size:11px;color:#ececec">New Guide</div>
<div class="t" style="left:1303px;top:566px;font-size:11.1px;color:#ececec">Clear All Guides</div>
<div class="t" style="left:1303px;top:590px;font-size:11px;color:#ececec">New Guide</div>
<div class="t" style="left:1303px;top:614px;font-size:11px;color:#f4f4f4">New Guide</div>

<div class="a" style="left:0;top:908px;width:1500px;height:1px;background:#3a3a3a"></div><div class="a" style="left:0;top:909px;width:1500px;height:1px;background:#c4c4c4"></div>
<div class="a" style="left:0;top:0;width:1px;height:908px;background:#3e3e3e"></div>
</body></html>
